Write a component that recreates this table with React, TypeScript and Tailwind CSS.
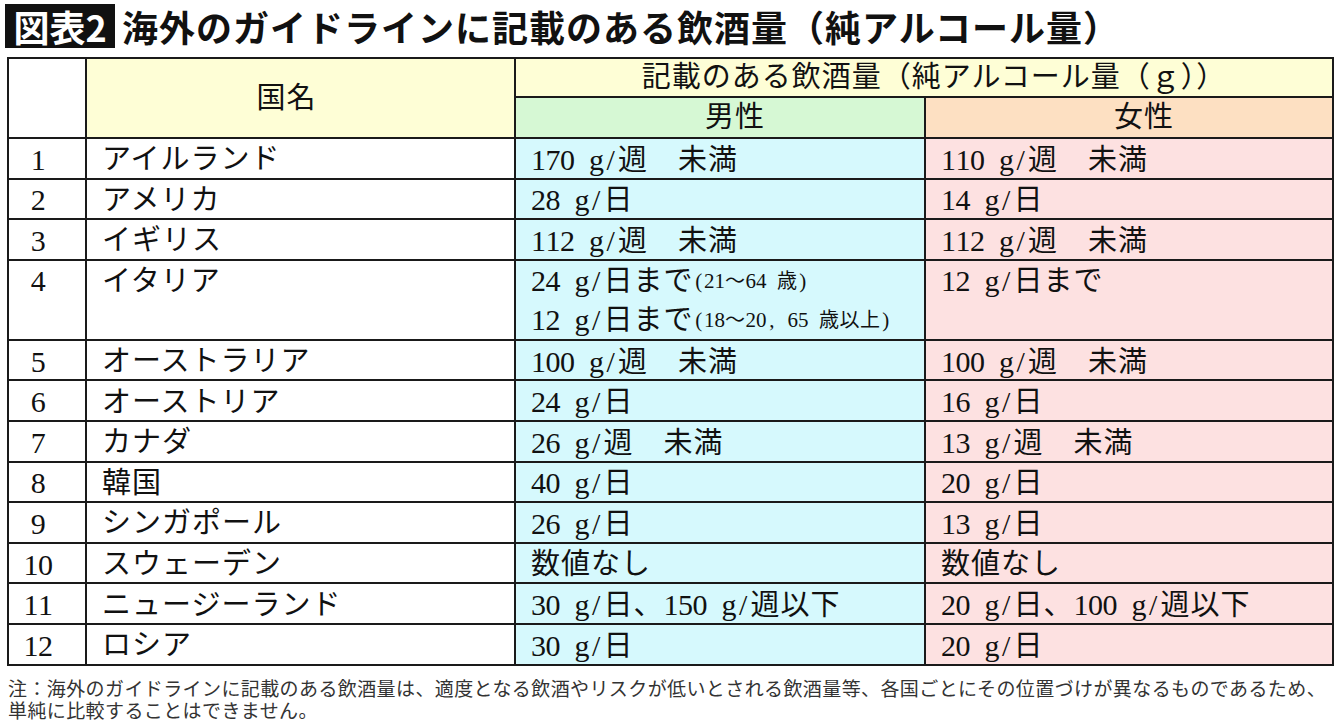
import React from "react";

type Row = { n: string; name: string; m: string; f: string };

const sp = "\u3000";

function Mix({ s, small }: { s: string; small?: boolean }) {
  const parts: React.ReactNode[] = [];
  let buf = "";
  const flush = (k: number) => {
    if (buf) {
      parts.push(<span key={`t${k}`}>{buf}</span>);
      buf = "";
    }
  };
  Array.from(s).forEach((c, i) => {
    if (c.charCodeAt(0) < 128) {
      flush(i);
      parts.push(
        <span
          key={i}
          className={
            small
              ? "inline-block w-[10.5px] text-center text-[21px] tracking-normal"
              : "inline-block w-[14.5px] text-center text-[30px] tracking-normal"
          }
        >
          {c === " " ? "\u00a0" : c}
        </span>
      );
    } else {
      buf += c;
    }
  });
  flush(9999);
  return small ? <span className="text-[20px] tracking-[0.5px]">{parts}</span> : <>{parts}</>;
}

const rows: Row[] = [
  { n: "1", name: "アイルランド", m: `170 g/週${sp}未満`, f: `110 g/週${sp}未満` },
  { n: "2", name: "アメリカ", m: "28 g/日", f: "14 g/日" },
  { n: "3", name: "イギリス", m: `112 g/週${sp}未満`, f: `112 g/週${sp}未満` },
  { n: "4", name: "イタリア", m: "", f: "" },
  { n: "5", name: "オーストラリア", m: `100 g/週${sp}未満`, f: `100 g/週${sp}未満` },
  { n: "6", name: "オーストリア", m: "24 g/日", f: "16 g/日" },
  { n: "7", name: "カナダ", m: `26 g/週${sp}未満`, f: `13 g/週${sp}未満` },
  { n: "8", name: "韓国", m: "40 g/日", f: "20 g/日" },
  { n: "9", name: "シンガポール", m: "26 g/日", f: "13 g/日" },
  { n: "10", name: "スウェーデン", m: "数値なし", f: "数値なし" },
  { n: "11", name: "ニュージーランド", m: "30 g/日、150 g/週以下", f: "20 g/日、100 g/週以下" },
  { n: "12", name: "ロシア", m: "30 g/日", f: "20 g/日" },
];

const cell = "border-r-2 border-b-2 border-[#1a1a1a] p-0";

export default function App() {
  return (
    <div className="w-[1340px] h-[723px] bg-white overflow-hidden text-[#111]">
      <div className="flex items-center h-[44px] mt-[4px] ml-[5px] font-['Noto_Sans_CJK_JP',sans-serif] font-bold">
        <div className="h-[44px] w-[110px] bg-[#111] text-white text-[36px] leading-none flex items-center justify-center">
          図表2
        </div>
        <div className="ml-[7px] text-[36px] leading-none tracking-[1px] text-[#111]">
          海外のガイドラインに記載のある飲酒量（純アルコール量）
        </div>
      </div>

      <table className="mt-[9px] ml-[7px] w-[1327px] table-fixed border-separate border-spacing-0 border-t-2 border-l-2 border-[#1a1a1a] font-['Liberation_Serif','Noto_Sans_CJK_JP',serif] text-[29px] leading-none tracking-[1px] whitespace-pre">
        <colgroup>
          <col className="w-[78px]" />
          <col className="w-[429px]" />
          <col className="w-[410px]" />
          <col className="w-[408px]" />
        </colgroup>
        <tbody>
          <tr className="h-[39px]">
            <td rowSpan={2} className={`${cell} bg-white`}></td>
            <td rowSpan={2} className={`${cell} bg-[#fefed6] text-center pr-[28px]`}>
              国名
            </td>
            <td colSpan={2} className={`${cell} bg-[#fefed6] text-center pl-[20px]`}>
              記載のある飲酒量（純アルコール量（ｇ））
            </td>
          </tr>
          <tr className="h-[41px]">
            <td className={`${cell} bg-[#d6f8d4] text-center pl-[30px]`}>男性</td>
            <td className={`${cell} bg-[#fde0c2] text-center pl-[30px]`}>女性</td>
          </tr>
          {rows.map((r) =>
            r.n === "4" ? (
              <tr key={r.n} className="h-[80px]">
                <td className={`${cell} bg-white align-top pr-[18px]`}>
                  <div className="h-[41px] flex items-center justify-center">
                    <Mix s={r.n} />
                  </div>
                </td>
                <td className={`${cell} bg-white align-top pl-[15px]`}>
                  <div className="h-[41px] flex items-center">{r.name}</div>
                </td>
                <td className={`${cell} bg-[#d6f9fd] align-top pl-[15px]`}>
                  <div className="h-[41px] flex items-center">
                    <Mix s="24 g/日まで" />
                    <Mix s="(21〜64 歳)" small />
                  </div>
                  <div className="h-[37px] flex items-center">
                    <Mix s="12 g/日まで" />
                    <Mix s="(18〜20, 65 歳以上)" small />
                  </div>
                </td>
                <td className={`${cell} bg-[#fde1e1] align-top pl-[15px]`}>
                  <div className="h-[41px] flex items-center">
                    <Mix s="12 g/日まで" />
                  </div>
                </td>
              </tr>
            ) : (
              <tr key={r.n} className="h-[40.6px]">
                <td className={`${cell} bg-white text-center pr-[18px] pt-[3px]`}>
                  <Mix s={r.n} />
                </td>
                <td className={`${cell} bg-white pl-[15px] pt-[3px]`}>{r.name}</td>
                <td className={`${cell} bg-[#d6f9fd] pl-[15px] pt-[3px]`}>
                  <Mix s={r.m} />
                </td>
                <td className={`${cell} bg-[#fde1e1] pl-[15px] pt-[3px]`}>
                  <Mix s={r.f} />
                </td>
              </tr>
            )
          )}
        </tbody>
      </table>

      <div className="mt-[11px] ml-[8px] font-['Noto_Sans_CJK_JP',sans-serif] text-[19px] leading-[22px] tracking-[0.4px] text-[#333]">
        <div>注：海外のガイドラインに記載のある飲酒量は、適度となる飲酒やリスクが低いとされる飲酒量等、各国ごとにその位置づけが異なるものであるため、</div>
        <div>単純に比較することはできません。</div>
      </div>
    </div>
  );
}
